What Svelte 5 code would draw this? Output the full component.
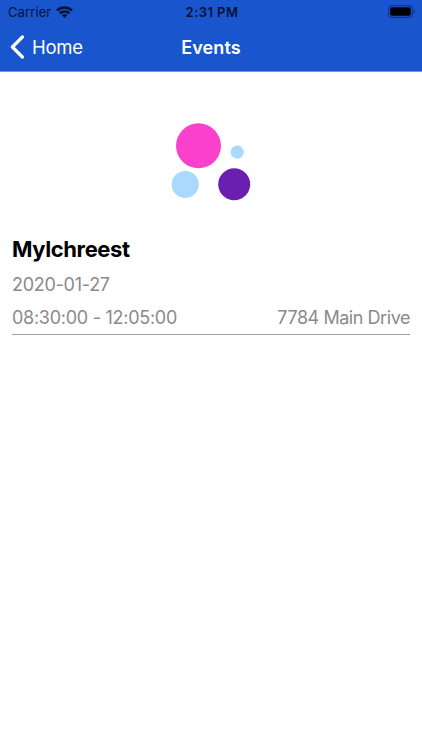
<script lang="ts">
  type EventItem = {
    name: string;
    date: string;
    start: string;
    end: string;
    address: string;
  };

  let events: EventItem[] = $state([
    {
      name: 'Mylchreest',
      date: '2020-01-27',
      start: '08:30:00',
      end: '12:05:00',
      address: '7784 Main Drive'
    }
  ]);
</script>

<div class="screen">
  <header>
    <div class="status-bar">
      <div class="carrier">
        <span>Carrier</span>
        <svg width="17" height="12" viewBox="0 0 17 12" fill="none" stroke="#061236" stroke-width="2.5">
          <path d="M1 4.5a10.7 10.7 0 0 1 15 0" />
          <path d="M3.7 7.4a6.8 6.8 0 0 1 9.6 0" />
          <path d="M8.5 12L5.8 9.3a3.9 3.9 0 0 1 5.4 0z" fill="#061236" stroke="none" />
        </svg>
      </div>
      <span class="time">2:31 PM</span>
      <svg class="battery" width="28" height="13" viewBox="0 0 28 13">
        <rect x="0.6" y="0.6" width="23.8" height="11.8" rx="3.3" fill="none" stroke="#103684" stroke-width="1.2" />
        <rect x="2.2" y="2.2" width="20.6" height="8.6" rx="1.8" fill="#000208" />
        <path d="M25.8 4.3c1.8.6 1.8 3.8 0 4.4z" fill="#103684" />
      </svg>
    </div>

    <nav>
      <button class="back" aria-label="Back to Home">
        <svg width="14" height="24" viewBox="0 0 14 24" fill="none" stroke="#fff" stroke-width="3.2" stroke-linecap="round" stroke-linejoin="round">
          <path d="M12.4 2L2.4 12l10 10" />
        </svg>
        <span>Home</span>
      </button>
      <h1>Events</h1>
    </nav>
  </header>

  <main>
    <svg class="logo" width="80" height="78" viewBox="0 0 80 78">
      <circle cx="27.5" cy="22.8" r="22.5" fill="#fb41cc" />
      <circle cx="66.2" cy="29.2" r="6.6" fill="#a9d9ff" />
      <circle cx="14.2" cy="61.4" r="13.5" fill="#a9d9ff" />
      <circle cx="63.2" cy="61.3" r="16" fill="#6a1fb1" />
    </svg>

    {#each events as event}
      <article class="event">
        <h2>{event.name}</h2>
        <p class="date">{event.date}</p>
        <div class="details">
          <span class="hours">{event.start} - {event.end}</span>
          <span class="address">{event.address}</span>
        </div>
      </article>
    {/each}
  </main>
</div>

<style>
  :global(body) {
    background: #fff;
  }

  .screen {
    min-height: 750px;
    font-family: Inter, 'Liberation Sans', sans-serif;
    background: #fff;
  }

  header {
    box-sizing: border-box;
    height: 72px;
    background: #1956cd;
    border-bottom: 1px solid #7296dc;
  }

  .status-bar {
    display: grid;
    grid-template-columns: 1fr auto 1fr;
    align-items: center;
    height: 23px;
    padding: 0 6px 0 8px;
    font-size: 13px;
    color: #061236;
  }

  .carrier {
    display: flex;
    align-items: center;
    gap: 5px;
    letter-spacing: 0.1px;
  }

  .time {
    font-weight: 600;
    letter-spacing: 0.45px;
  }

  .battery {
    justify-self: end;
  }

  nav {
    display: grid;
    grid-template-columns: 1fr auto 1fr;
    align-items: center;
    height: 48px;
    padding: 0 10px;
  }

  .back {
    display: flex;
    align-items: center;
    gap: 8px;
    padding: 0;
    border: 0;
    background: none;
    color: #fff;
    font: inherit;
    font-size: 18.5px;
    letter-spacing: -0.25px;
  }

  h1 {
    margin: 0;
    font-size: 18px;
    font-weight: 600;
    letter-spacing: 0.1px;
    color: #fff;
  }

  main {
    display: flex;
    flex-direction: column;
    padding: 51px 12px 0;
  }

  .logo {
    align-self: center;
  }

  .event {
    margin-top: 33px;
    padding-bottom: 4px;
    border-bottom: 1px solid #a0a0a0;
    color: #8a8a8a;
    font-size: 18px;
    letter-spacing: -0.27px;
  }

  h2 {
    margin: 0;
    font-size: 22px;
    line-height: 30px;
    font-weight: 700;
    letter-spacing: -0.4px;
    color: #000;
  }

  .date {
    margin: 9px 0 9px;
    line-height: 24px;
  }

  .details {
    display: flex;
    justify-content: space-between;
    line-height: 24px;
  }

  .address {
    letter-spacing: -0.45px;
  }
</style>
